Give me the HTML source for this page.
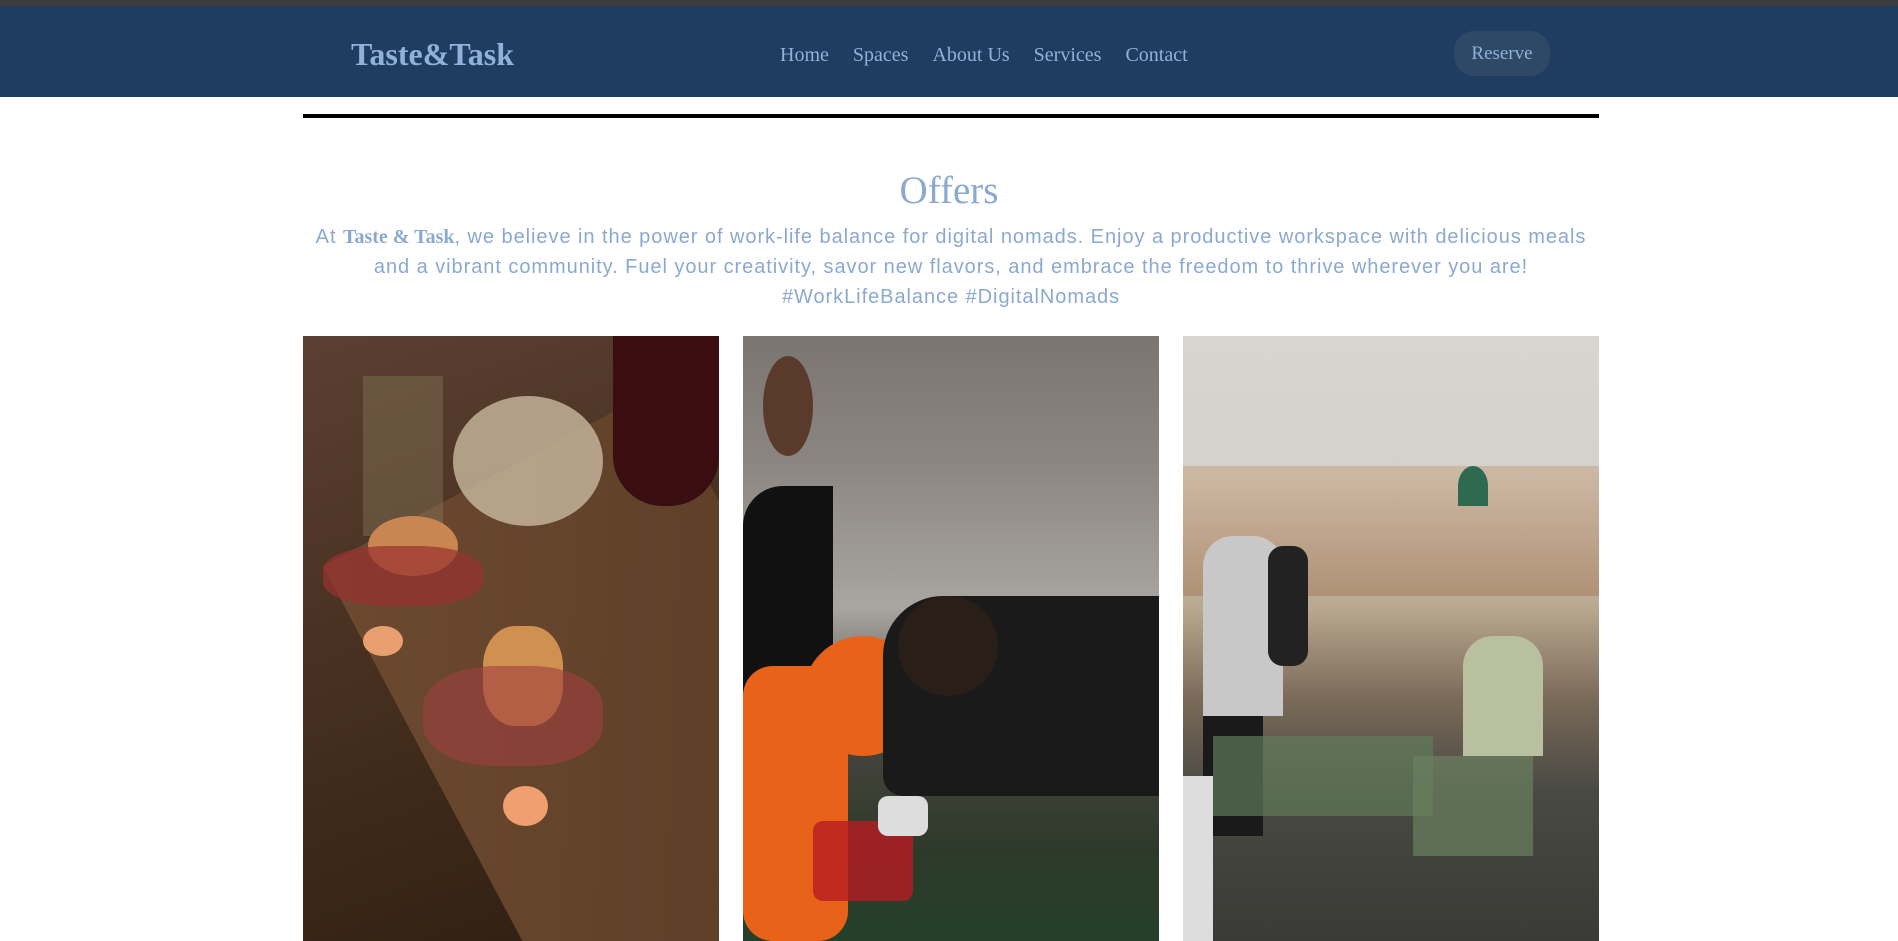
<!DOCTYPE html>
<html><head><meta charset="utf-8"><style>
*{margin:0;padding:0;box-sizing:border-box}
html,body{width:1898px;height:941px;overflow:hidden}
body{background:#fff;font-family:"Liberation Serif",serif;position:relative}
.top{position:absolute;left:0;top:0;width:1898px;height:6px;background:#3b3b3b}
header{position:absolute;left:0;top:6px;width:1898px;height:91px;background:#1f3d60}
.logo{position:absolute;left:351px;top:30px;font-size:32px;font-weight:bold;color:#8fb1da}
nav{position:absolute;left:780px;top:38px;font-size:20px;color:#8fb1da;white-space:nowrap}
nav span{margin-right:24px}
.btn{position:absolute;left:1454px;top:25px;width:96px;height:45px;border-radius:20px;background:#2e4966;color:#8fb1da;font-size:19px;text-align:center;line-height:45px}
.line{position:absolute;left:303px;top:114px;width:1296px;height:4px;background:#000}
h1{position:absolute;left:0;width:1898px;top:168px;text-align:center;font-weight:normal;font-size:39px;color:#8aa9d1}
p{position:absolute;left:253px;width:1396px;top:222px;text-align:center;font-family:"Liberation Sans",sans-serif;font-size:20px;letter-spacing:0.95px;line-height:30px;color:#8aa9d1;white-space:nowrap}
p b{font-family:"Liberation Serif",serif;letter-spacing:0}
.img{position:absolute;top:336px;height:605px;width:416px;overflow:hidden}
</style></head><body>
<div class="top"></div>
<header>
<div class="logo">Taste&amp;Task</div>
<nav><span>Home</span><span>Spaces</span><span>About Us</span><span>Services</span><span>Contact</span></nav>
<div class="btn">Reserve</div>
</header>
<div class="line"></div>
<h1>Offers</h1>
<p>At <b>Taste &amp; Task</b>, we believe in the power of work-life balance for digital nomads. Enjoy a productive workspace with delicious meals<br>and a vibrant community. Fuel your creativity, savor new flavors, and embrace the freedom to thrive wherever you are!<br>#WorkLifeBalance #DigitalNomads</p>

<div class="img" style="left:303px;background:linear-gradient(160deg,#5a4030 0%,#4a3222 40%,#3c2818 70%,#2e1e12 100%)">
<div style="position:absolute;left:20px;top:230px;width:380px;height:560px;background:linear-gradient(120deg,#6b4a30,#5a3a24);transform:rotate(-28deg);transform-origin:left top"></div>
<div style="position:absolute;left:150px;top:60px;width:150px;height:130px;border-radius:50%;background:#c9b9a0;opacity:.8"></div>
<div style="position:absolute;left:310px;top:0;width:106px;height:170px;background:#3a0d10;border-radius:0 0 50px 50px"></div>
<div style="position:absolute;left:60px;top:40px;width:80px;height:160px;background:#8a7a60;opacity:.4"></div>
<div style="position:absolute;left:65px;top:180px;width:90px;height:60px;background:#c98650;border-radius:50%"></div>
<div style="position:absolute;left:20px;top:210px;width:160px;height:60px;background:#9a3030;border-radius:40%;opacity:.7"></div>
<div style="position:absolute;left:180px;top:290px;width:80px;height:100px;background:#d09050;border-radius:40%"></div>
<div style="position:absolute;left:120px;top:330px;width:180px;height:100px;background:#a04040;border-radius:40%;opacity:.6"></div>
<div style="position:absolute;left:60px;top:290px;width:40px;height:30px;background:#e8a070;border-radius:50%"></div>
<div style="position:absolute;left:200px;top:450px;width:45px;height:40px;background:#f0a070;border-radius:50%"></div>
</div>

<div class="img" style="left:743px;background:linear-gradient(180deg,#7a7570 0%,#8a8580 20%,#a9a5a0 45%,#4a4540 65%,#2d3a2a 85%,#25402a 100%)">
<div style="position:absolute;left:0;top:150px;width:90px;height:380px;background:#111;border-radius:40px 0 0 0"></div>
<div style="position:absolute;left:20px;top:20px;width:50px;height:100px;background:#5a3a2a;border-radius:50%"></div>
<div style="position:absolute;left:0;top:330px;width:105px;height:275px;background:#e8621a;border-radius:30px"></div>
<div style="position:absolute;left:60px;top:300px;width:120px;height:120px;background:#e8621a;border-radius:50%"></div>
<div style="position:absolute;left:140px;top:260px;width:276px;height:200px;background:#1a1a1a;border-radius:60px 0 0 20px"></div>
<div style="position:absolute;left:155px;top:260px;width:100px;height:100px;background:#2a1e18;border-radius:50%"></div>
<div style="position:absolute;left:70px;top:485px;width:100px;height:80px;background:#b81c20;border-radius:10px;opacity:.8"></div>
<div style="position:absolute;left:135px;top:460px;width:50px;height:40px;background:#ddd;border-radius:10px"></div>
</div>

<div class="img" style="left:1183px;background:linear-gradient(180deg,#d8d4d0 0%,#d4d0ca 25%,#b8a890 45%,#7a6a58 60%,#4a4a44 75%,#3a3a36 100%)">
<div style="position:absolute;left:0;top:130px;width:416px;height:130px;background:linear-gradient(180deg,#c7a88a,#a88060);opacity:.6"></div>
<div style="position:absolute;left:20px;top:200px;width:80px;height:180px;background:#c8c8c8;border-radius:30px 30px 0 0"></div>
<div style="position:absolute;left:85px;top:210px;width:40px;height:120px;background:#222;border-radius:15px"></div>
<div style="position:absolute;left:20px;top:380px;width:60px;height:120px;background:#1a1a1a"></div>
<div style="position:absolute;left:280px;top:300px;width:80px;height:120px;background:#b8c0a0;border-radius:30px 30px 0 0"></div>
<div style="position:absolute;left:30px;top:400px;width:220px;height:80px;background:#5f7a5a;opacity:.7"></div>
<div style="position:absolute;left:230px;top:420px;width:120px;height:100px;background:#6a8060;opacity:.7"></div>
<div style="position:absolute;left:275px;top:130px;width:30px;height:40px;background:#2d6a50;border-radius:50% 50% 0 0"></div>
<div style="position:absolute;left:0;top:440px;width:30px;height:165px;background:#ddd"></div>
</div>
</body></html>
